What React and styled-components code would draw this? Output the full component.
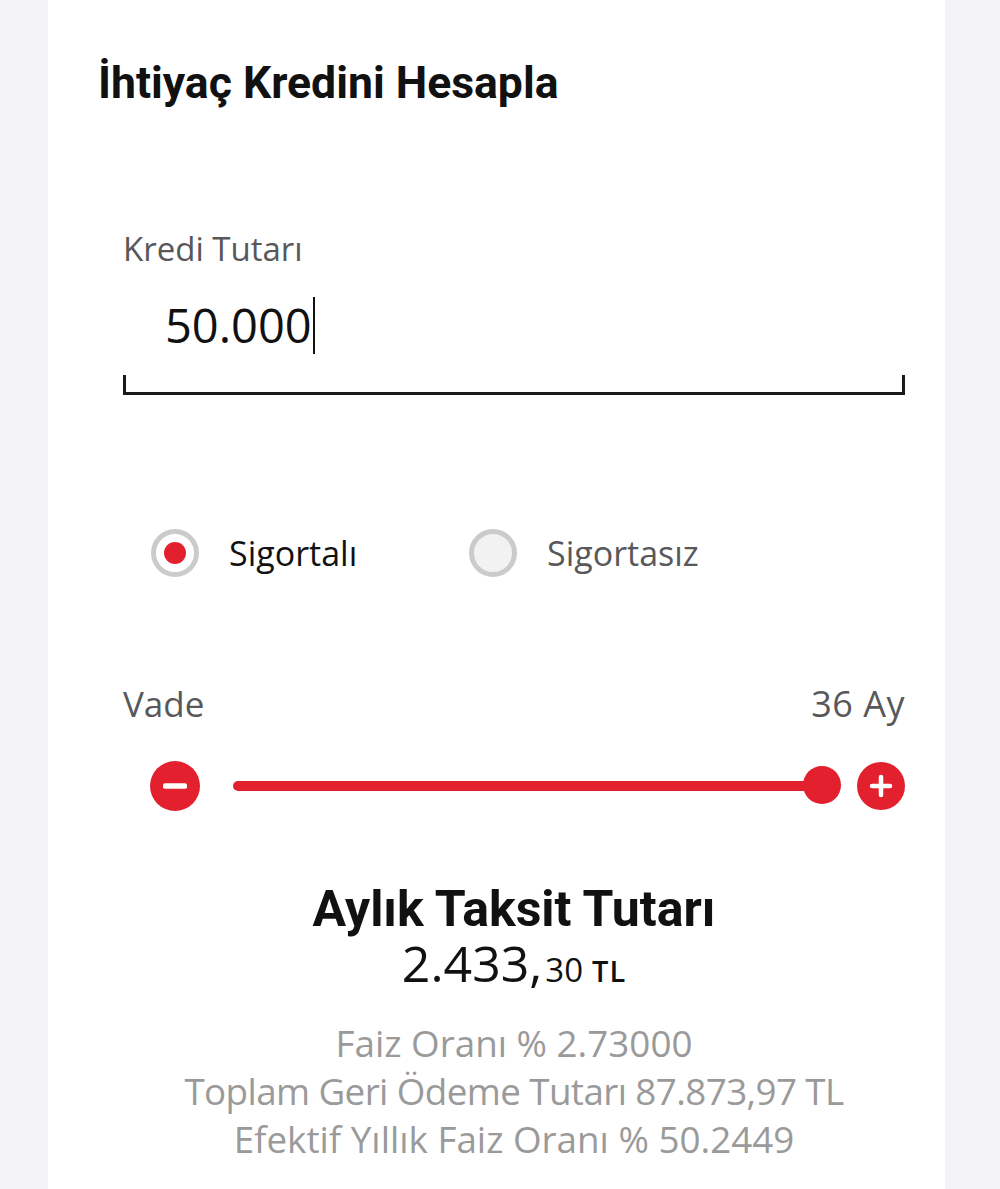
import React from "react";
import styled, { createGlobalStyle } from "styled-components";

const RED = "#e3202e";
const BOLD_FONT = `Roboto, "Open Sans", sans-serif`;

const Global = createGlobalStyle`
  html, body { margin: 0; padding: 0; background: #f3f3f5; }
  body {
    font-family: "Open Sans", "Noto Sans", sans-serif;
    color: #111;
    -webkit-font-smoothing: antialiased;
  }
`;

const Page = styled.div`
  min-height: 1189px;
  padding-left: 48px;
  display: flex;
`;

const Card = styled.main`
  width: 897px;
  min-height: 1189px;
  background: #fff;
  padding-top: 57px;
  box-sizing: border-box;
`;

const Title = styled.h1`
  margin: 0 0 0 50px;
  font-family: ${BOLD_FONT};
  font-size: 44.5px;
  line-height: 52px;
  font-weight: 700;
  color: #111;
`;

const Form = styled.section`
  padding: 0 40px 0 75px;
  display: flex;
  flex-direction: column;
`;

const FieldLabel = styled.label`
  margin-top: 120px;
  font-size: 33px;
  line-height: 40px;
  color: #58585a;
`;

const InputLine = styled.div`
  margin-top: 28px;
  padding-left: 42px;
  display: flex;
  align-items: stretch;
  height: 57px;
`;

const Value = styled.span`
  font-size: 47px;
  line-height: 57px;
  color: #111;
`;

const Caret = styled.span`
  width: 2px;
  margin-left: 1px;
  background: #111;
`;

const Underline = styled.div`
  margin-top: 21px;
  height: 17px;
  border: 3px solid #1a1a1a;
  border-top: none;
`;

const RadioRow = styled.div`
  margin-top: 134px;
  padding-left: 28px;
  display: grid;
  grid-template-columns: 318px auto;
  align-items: center;
`;

const Option = styled.div`
  display: flex;
  align-items: center;
  gap: 30px;
`;

const RadioCircle = styled.span`
  width: 48px;
  height: 48px;
  box-sizing: border-box;
  border-radius: 50%;
  border: 5px solid #cbcbcb;
  background: ${(p) => (p.checked ? "#fff" : "#f2f2f2")};
  display: flex;
  align-items: center;
  justify-content: center;
  &::after {
    content: "";
    display: ${(p) => (p.checked ? "block" : "none")};
    width: 22px;
    height: 22px;
    border-radius: 50%;
    background: ${RED};
  }
`;

const OptionText = styled.span`
  font-size: 34px;
  line-height: 48px;
  color: ${(p) => (p.checked ? "#111" : "#58585a")};
`;

const VadeRow = styled.div`
  margin-top: 107px;
  display: flex;
  justify-content: space-between;
  font-size: 35px;
  line-height: 40px;
  color: #58585a;
`;

const VadeValue = styled.span`
  letter-spacing: 0.5px;
  font-size: 36px;
`;

const SliderRow = styled.div`
  margin-top: 37px;
  padding-left: 27px;
  height: 50px;
  display: flex;
  align-items: center;
`;

const RoundButton = styled.button`
  width: ${(p) => p.size}px;
  height: ${(p) => p.size}px;
  flex: none;
  padding: 0;
  border: none;
  border-radius: 50%;
  background: ${RED};
  display: flex;
  align-items: center;
  justify-content: center;
  margin-left: ${(p) => p.gap || 0}px;
  svg { display: block; }
`;

const Track = styled.div`
  flex: 1;
  margin-left: 33px;
  display: flex;
  align-items: center;
`;

const Fill = styled.div`
  flex: 1;
  height: 10px;
  border-radius: 5px;
  background: ${RED};
  margin-right: -19px;
`;

const Thumb = styled.div`
  width: 38px;
  height: 38px;
  margin-top: -3px;
  border-radius: 50%;
  background: ${RED};
  position: relative;
`;

const Result = styled.div`
  margin-top: 71px;
  display: flex;
  flex-direction: column;
  align-items: center;
  text-align: center;
`;

const ResultTitle = styled.h2`
  margin: 0;
  font-family: ${BOLD_FONT};
  font-size: 50px;
  line-height: 54px;
  font-weight: 700;
  color: #111;
`;

const Amount = styled.div`
  margin-top: 1px;
  font-size: 50px;
  line-height: 52px;
  font-weight: 500;
  color: #111;
  white-space: nowrap;
`;

const Cents = styled.span`
  font-size: 33px;
  font-weight: 400;
  margin-left: 3px;
`;

const Currency = styled.span`
  font-size: 29px;
  font-weight: 600;
  letter-spacing: 1px;
  margin-left: 9px;
`;

const Details = styled.div`
  margin-top: 22px;
  display: flex;
  flex-direction: column;
  align-items: center;
`;

const DetailLine = styled.div`
  font-size: 36.8px;
  line-height: 48px;
  letter-spacing: ${(p) => (p.tight ? "-0.6px" : "0")};
  color: #9a9a9a;
  white-space: nowrap;
`;

const MinusIcon = () => (
  <svg width="24" height="24" viewBox="0 0 24 24">
    <line x1="2.5" y1="12" x2="21.5" y2="12" stroke="#fff" strokeWidth="5.5" strokeLinecap="round" />
  </svg>
);

const PlusIcon = () => (
  <svg width="24" height="24" viewBox="0 0 24 24">
    <line x1="3" y1="12" x2="21" y2="12" stroke="#fff" strokeWidth="4.5" strokeLinecap="round" />
    <line x1="12" y1="3" x2="12" y2="21" stroke="#fff" strokeWidth="4.5" strokeLinecap="round" />
  </svg>
);

export default function App() {
  return (
    <Page>
      <Global />
      <Card>
        <Title>İhtiyaç Kredini Hesapla</Title>
        <Form>
          <FieldLabel>Kredi Tutarı</FieldLabel>
          <InputLine>
            <Value>50.000</Value>
            <Caret />
          </InputLine>
          <Underline />

          <RadioRow>
            <Option>
              <RadioCircle checked />
              <OptionText checked>Sigortalı</OptionText>
            </Option>
            <Option>
              <RadioCircle />
              <OptionText>Sigortasız</OptionText>
            </Option>
          </RadioRow>

          <VadeRow>
            <span>Vade</span>
            <VadeValue>36 Ay</VadeValue>
          </VadeRow>

          <SliderRow>
            <RoundButton size={50} aria-label="Azalt">
              <MinusIcon />
            </RoundButton>
            <Track>
              <Fill />
              <Thumb />
            </Track>
            <RoundButton size={48} gap={16} aria-label="Artır">
              <PlusIcon />
            </RoundButton>
          </SliderRow>

          <Result>
            <ResultTitle>Aylık Taksit Tutarı</ResultTitle>
            <Amount>
              2.433,<Cents>30</Cents>
              <Currency>TL</Currency>
            </Amount>
            <Details>
              <DetailLine>Faiz Oranı % 2.73000</DetailLine>
              <DetailLine tight>Toplam Geri Ödeme Tutarı 87.873,97 TL</DetailLine>
              <DetailLine>Efektif Yıllık Faiz Oranı % 50.2449</DetailLine>
            </Details>
          </Result>
        </Form>
      </Card>
    </Page>
  );
}
